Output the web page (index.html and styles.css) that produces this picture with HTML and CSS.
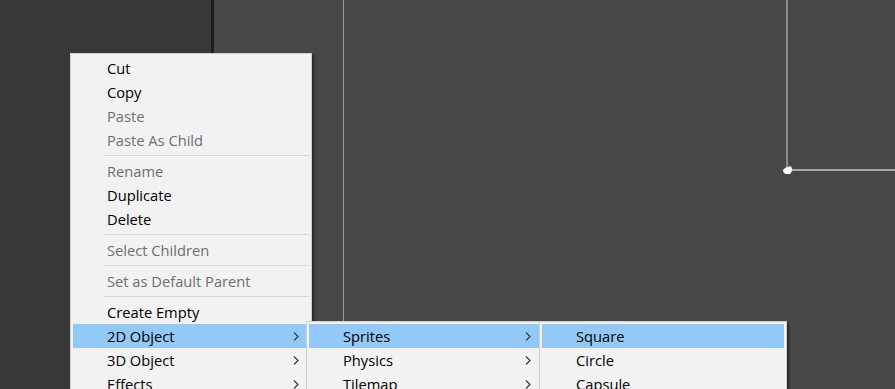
FILE: index.html
```html
<!DOCTYPE html>
<html>
<head>
<meta charset="utf-8">
<link rel="stylesheet" href="styles.css">
</head>
<body>
<div class="app">
  <div class="hierarchy"></div>
  <div class="divider"></div>
  <div class="scene">
    <svg class="scene-gizmos" width="681" height="389" viewBox="0 0 681 389">
      <line x1="129.5" y1="0" x2="129.5" y2="389" stroke="#9a9a9a" stroke-width="1"/>
      <line x1="573" y1="0" x2="573" y2="170" stroke="#8a8a8a" stroke-width="2"/>
      <line x1="573" y1="170" x2="681" y2="170" stroke="#a6a6a6" stroke-width="2"/>
      <path d="M569 170 Q571 167 574 167 L576 166 Q579 168 578 171 L576 174 L572 174 Q569 173 569 170 Z" fill="#ffffff"/>
    </svg>
  </div>
</div>

<div class="menu menu-main">
  <div class="item">Cut</div>
  <div class="item">Copy</div>
  <div class="item disabled">Paste</div>
  <div class="item disabled">Paste As Child</div>
  <div class="sep"></div>
  <div class="item disabled">Rename</div>
  <div class="item">Duplicate</div>
  <div class="item">Delete</div>
  <div class="sep"></div>
  <div class="item disabled">Select Children</div>
  <div class="sep"></div>
  <div class="item disabled">Set as Default Parent</div>
  <div class="sep"></div>
  <div class="item">Create Empty</div>
  <div class="item sub active">2D Object<svg class="chev" width="6" height="9" viewBox="0 0 6 9"><path d="M1 0.5 L5 4.5 L1 8.5" fill="none" stroke="#3a3a3a" stroke-width="1.2"/></svg></div>
  <div class="item sub">3D Object<svg class="chev" width="6" height="9" viewBox="0 0 6 9"><path d="M1 0.5 L5 4.5 L1 8.5" fill="none" stroke="#3a3a3a" stroke-width="1.2"/></svg></div>
  <div class="item sub">Effects<svg class="chev" width="6" height="9" viewBox="0 0 6 9"><path d="M1 0.5 L5 4.5 L1 8.5" fill="none" stroke="#3a3a3a" stroke-width="1.2"/></svg></div>
</div>

<div class="menu menu-sub1">
  <div class="item sub active">Sprites<svg class="chev" width="6" height="9" viewBox="0 0 6 9"><path d="M1 0.5 L5 4.5 L1 8.5" fill="none" stroke="#3a3a3a" stroke-width="1.2"/></svg></div>
  <div class="item sub">Physics<svg class="chev" width="6" height="9" viewBox="0 0 6 9"><path d="M1 0.5 L5 4.5 L1 8.5" fill="none" stroke="#3a3a3a" stroke-width="1.2"/></svg></div>
  <div class="item sub">Tilemap<svg class="chev" width="6" height="9" viewBox="0 0 6 9"><path d="M1 0.5 L5 4.5 L1 8.5" fill="none" stroke="#3a3a3a" stroke-width="1.2"/></svg></div>
</div>

<div class="menu menu-sub2">
  <div class="item active">Square</div>
  <div class="item">Circle</div>
  <div class="item">Capsule</div>
</div>
</body>
</html>
```
FILE: styles.css
```css
html, body {
  margin: 0;
  padding: 0;
  width: 895px;
  height: 389px;
  overflow: hidden;
}

body {
  position: relative;
  font-family: "Open Sans", "Noto Sans", "Liberation Sans", sans-serif;
  font-size: 14.7px;
  background: #474747;
}

.app {
  display: flex;
  height: 389px;
}

.hierarchy {
  width: 211px;
  background: #383838;
}

.divider {
  width: 3px;
  background: #1f1f1f;
}

.scene {
  flex: 1;
  background: #474747;
}

.scene-gizmos {
  display: block;
}

.menu {
  position: absolute;
  box-sizing: border-box;
  background: #f2f2f2;
  border: 1px solid #cfcfcf;
  padding: 2px;
  box-shadow: 2px 2px 2px rgba(0, 0, 0, 0.45);
}

.menu-main {
  left: 70px;
  top: 53px;
  width: 242px;
}

.menu-sub1 {
  left: 306px;
  top: 321px;
  width: 238px;
}

.menu-sub2 {
  left: 539px;
  top: 321px;
  width: 248px;
}

.item {
  display: flex;
  align-items: center;
  justify-content: space-between;
  height: 24px;
  padding: 0 10px 0 34px;
  color: #000;
  white-space: nowrap;
}

.item.disabled {
  color: #6f6f6f;
}

.item.active {
  background: #93c9f6;
}

.chev {
  display: block;
}

.sep {
  height: 7px;
  display: flex;
  align-items: center;
  padding-left: 30px;
}

.sep::before {
  content: "";
  display: block;
  flex: 1;
  height: 1px;
  background: #d6d6d6;
}
```
